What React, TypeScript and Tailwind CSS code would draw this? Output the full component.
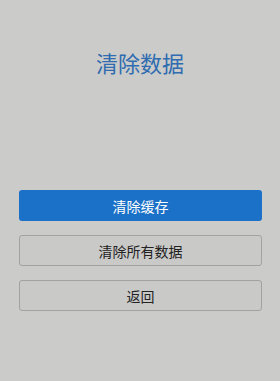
import React from "react";

const font = { fontFamily: '"Noto Sans CJK SC", "Noto Sans", sans-serif' };

const App = () => {
  return (
    <div
      className="w-[280px] h-[381px] bg-[#cbcbca] flex flex-col items-center"
      style={font}
    >
      <h1 className="mt-[47px] text-[22px] leading-[30px] text-[#2f6cb0] font-normal">
        清除数据
      </h1>

      <div className="mt-[113px] w-[243px] ml-[1px] flex flex-col gap-[14px]">
        <button className="h-[31px] w-full rounded-[3px] bg-[#1b71c8] text-white text-[14px] leading-none">
          清除缓存
        </button>
        <button className="h-[31px] w-full rounded-[3px] border border-[#a2a2a2] bg-[#c9c9c8] text-[#222] text-[14px] leading-none">
          清除所有数据
        </button>
        <button className="h-[31px] w-full rounded-[3px] border border-[#a2a2a2] bg-[#c9c9c8] text-[#222] text-[14px] leading-none">
          返回
        </button>
      </div>
    </div>
  );
};

export default App;
